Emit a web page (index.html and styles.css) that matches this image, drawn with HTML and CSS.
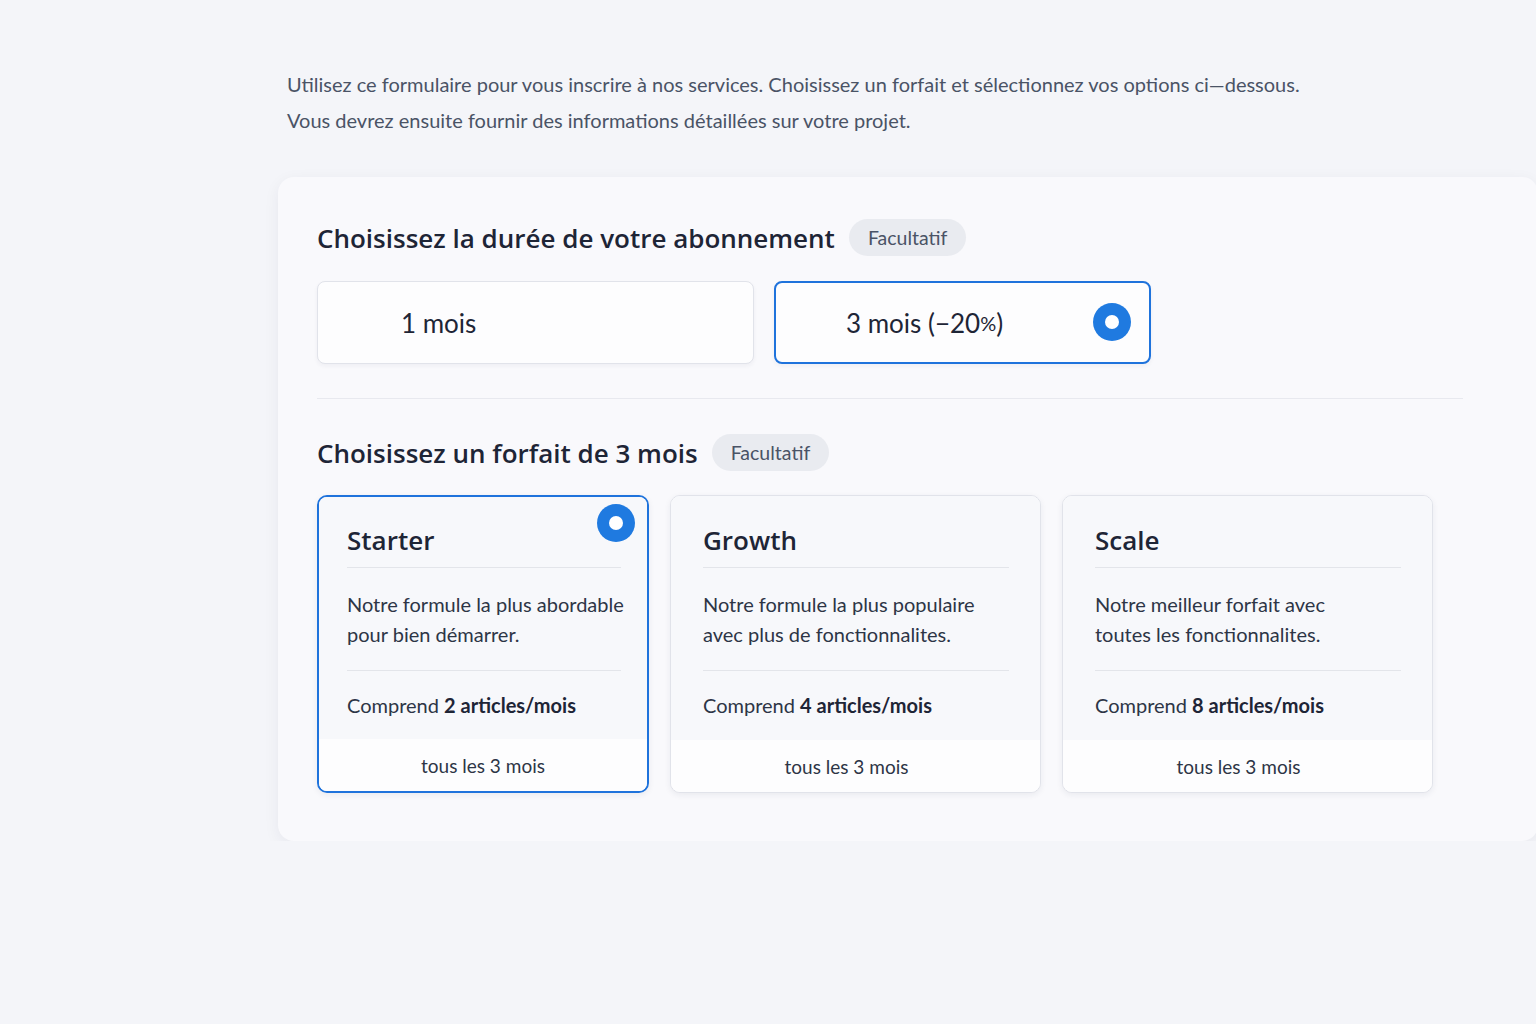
FILE: index.html
```html
<!DOCTYPE html>
<html lang="fr">
<head>
    <meta charset="UTF-8">
    <meta name="viewport" content="width=device-width, initial-scale=1.0">
    <title>Inscription</title>
    <link rel="stylesheet" href="styles.css">
</head>
<body>
    <div class="page">
        <p class="intro">
            Utilisez ce formulaire pour vous inscrire à nos services. Choisissez un forfait et sélectionnez vos options ci—dessous.<br>
            Vous devrez ensuite fournir des informations détaillées sur votre projet.
        </p>

        <div class="panel">
            <div class="section-title">
                <h2>Choisissez la durée de votre abonnement</h2>
                <span class="badge">Facultatif</span>
            </div>

            <div class="durations">
                <div class="duration duration-one">1 mois</div>
                <div class="duration duration-three selected">
                    3 mois (−20<small>%</small>)
                    <span class="radio"></span>
                </div>
            </div>

            <hr class="divider">

            <div class="section-title">
                <h2>Choisissez un forfait de 3 mois</h2>
                <span class="badge">Facultatif</span>
            </div>

            <div class="plans">
                <div class="plan plan-small selected">
                    <span class="radio"></span>
                    <div class="plan-body">
                        <h3>Starter</h3>
                        <p class="plan-desc">Notre formule la plus abordable<br>pour bien démarrer.</p>
                        <p class="plan-count">Comprend <b>2 articles/mois</b></p>
                    </div>
                    <div class="plan-foot">tous les 3 mois</div>
                </div>
                <div class="plan">
                    <div class="plan-body">
                        <h3>Growth</h3>
                        <p class="plan-desc">Notre formule la plus populaire<br>avec plus de fonctionnalites.</p>
                        <p class="plan-count">Comprend <b>4 articles/mois</b></p>
                    </div>
                    <div class="plan-foot">tous les 3 mois</div>
                </div>
                <div class="plan">
                    <div class="plan-body">
                        <h3>Scale</h3>
                        <p class="plan-desc">Notre meilleur forfait avec<br>toutes les fonctionnalites.</p>
                        <p class="plan-count">Comprend <b>8 articles/mois</b></p>
                    </div>
                    <div class="plan-foot">tous les 3 mois</div>
                </div>
            </div>
        </div>
    </div>
</body>
</html>
```

FILE: styles.css
```css
body {
    margin: 0;
    font-family: Lato, "Noto Sans", sans-serif;
    background-color: #f4f5f9;
    color: #1e2536;
    overflow: hidden;
}

.page {
    padding: 66px 0 0 278px;
}

.intro {
    margin: 0 0 39px 9px;
    font-size: 20px;
    line-height: 36px;
    color: #4a5366;
}

.panel {
    width: 1146px;
    padding: 42px 75px 48px 39px;
    background-color: #f9f9fc;
    border-radius: 16px;
    box-shadow: 0 4px 16px rgba(30, 40, 70, 0.06);
}

.section-title {
    display: flex;
    align-items: center;
    gap: 14px;
    height: 37px;
}

.section-title h2 {
    margin: 0;
    font-family: "Open Sans", Lato, sans-serif;
    font-size: 26px;
    font-weight: 600;
    color: #1e2536;
}

.badge {
    display: inline-flex;
    align-items: center;
    height: 37px;
    padding: 0 19px;
    border-radius: 19px;
    background-color: #e9ebf0;
    color: #4a5366;
    font-size: 19.5px;
}

.durations {
    display: flex;
    gap: 20px;
    margin-top: 25px;
}

.duration {
    position: relative;
    display: flex;
    align-items: center;
    box-sizing: border-box;
    height: 83px;
    background-color: #fdfdfe;
    border: 1px solid #e1e3ea;
    border-radius: 8px;
    box-shadow: 0 2px 4px rgba(30, 40, 70, 0.05);
    font-size: 26px;
    color: #1e2536;
}

.duration small {
    font-size: 20px;
}

.duration-one {
    width: 437px;
    padding-left: 83px;
}

.duration-three {
    width: 377px;
    padding-left: 70px;
}

.selected {
    border: 2px solid #1f73dc;
}

.radio {
    position: absolute;
    width: 38px;
    height: 38px;
    border-radius: 50%;
    background-color: #1f7ae0;
}

.radio::after {
    content: "";
    position: absolute;
    top: 12px;
    left: 12px;
    width: 14px;
    height: 14px;
    border-radius: 50%;
    background-color: #fff;
}

.duration .radio {
    right: 18px;
    top: 20px;
}

.divider {
    margin: 34px 0 35px;
    border: 0;
    border-top: 1px solid #e8e9ef;
}

.plans {
    display: flex;
    gap: 21px;
    margin-top: 24px;
}

.plan {
    position: relative;
    display: flex;
    flex-direction: column;
    box-sizing: border-box;
    width: 371px;
    height: 298px;
    border: 1px solid #e1e3ea;
    border-radius: 10px;
    background-color: #fdfdfe;
    box-shadow: 0 2px 6px rgba(30, 40, 70, 0.07);
    overflow: hidden;
}

.plan-small {
    width: 332px;
}

.plan.selected {
    border: 2px solid #1f73dc;
}

.plan .radio {
    top: 7px;
    right: 12px;
}

.plan-body {
    flex: 1;
    padding: 27px 31px 0 32px;
    background-color: #f7f8fb;
}

.plan.selected .plan-body {
    padding: 26px 26px 0 28px;
}

.plan h3 {
    margin: 0;
    padding-bottom: 10px;
    border-bottom: 1px solid #e3e5ea;
    font-family: "Open Sans", Lato, sans-serif;
    font-size: 26px;
    line-height: 34px;
    font-weight: 600;
    color: #1e2536;
}

.plan-desc {
    margin: 0;
    padding: 21px 0 21px;
    border-bottom: 1px solid #e3e5ea;
    font-size: 20px;
    line-height: 30px;
    color: #2d3546;
    white-space: nowrap;
}

.plan-count {
    margin: 0;
    padding-top: 19px;
    font-size: 20px;
    line-height: 30px;
    color: #2d3546;
}

.plan-count b {
    color: #1e2536;
}

.plan-foot {
    height: 52px;
    display: flex;
    align-items: center;
    justify-content: center;
    padding-right: 18px;
    font-size: 19px;
    color: #2d3546;
    background-color: #fdfdfe;
}

.plan.selected .plan-foot {
    padding-right: 0;
}
```
